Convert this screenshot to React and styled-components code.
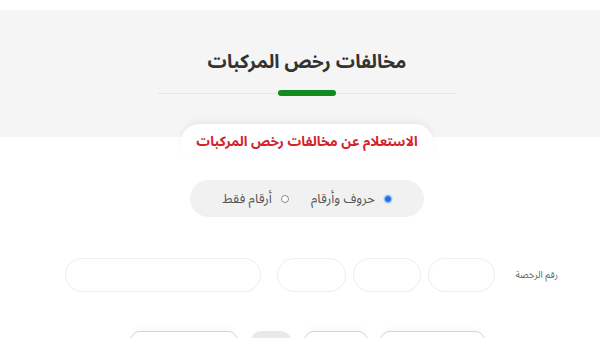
import * as React from "react";
import styled, { createGlobalStyle } from "styled-components";

const GlobalStyle = createGlobalStyle`
  html, body {
    margin: 0;
    padding: 0;
    background: #ffffff;
    overflow: hidden;
  }
  body {
    font-family: "Noto Sans Arabic", "DejaVu Sans", sans-serif;
    direction: rtl;
  }
`;

const Page = styled.main`
  padding-top: 10px;
  height: 328px;
  overflow: hidden;
`;

const HeaderBand = styled.header`
  background: #f5f5f5;
  height: 127px;
  padding-top: 39px;
  box-sizing: border-box;
  padding-left: 14px;
`;

const PageTitle = styled.h1`
  margin: 0;
  text-align: center;
  font-size: 19px;
  line-height: 26px;
  font-weight: 700;
  color: #333333;
`;

const Divider = styled.div`
  position: relative;
  width: 298px;
  height: 6px;
  margin: 15px auto 0;
  display: flex;
  align-items: center;
  justify-content: center;

  &::before {
    content: "";
    position: absolute;
    left: 0;
    right: 0;
    top: 3px;
    height: 1px;
    background: #e6e6e6;
  }
`;

const GreenBar = styled.span`
  position: relative;
  width: 58px;
  height: 6px;
  border-radius: 3px;
  background: #138a1f;
`;

const Content = styled.section`
  padding-left: 14px;
`;

const Tab = styled.div`
  width: 252px;
  height: 32px;
  margin: -13px auto 0;
  background: #ffffff;
  border-radius: 18px 18px 0 0;
  box-shadow: 0 -3px 6px rgba(0, 0, 0, 0.05);
  display: flex;
  align-items: center;
  justify-content: center;
  padding-top: 2px;
  box-sizing: border-box;
  color: #d3232c;
  font-size: 13.5px;
  font-weight: 700;
  white-space: nowrap;
`;

const RadioPill = styled.div`
  width: 234px;
  height: 37px;
  margin: 24px auto 0;
  border-radius: 19px;
  background: #f1f1f1;
  display: flex;
  align-items: center;
  justify-content: center;
  gap: 22px;
  box-sizing: border-box;
`;

const RadioOption = styled.label`
  display: flex;
  align-items: center;
  gap: 9px;
  font-size: 13px;
  color: #555555;
`;

const RadioDot = styled.span`
  width: 8px;
  height: 8px;
  border-radius: 50%;
  box-sizing: border-box;
  border: 1px solid ${(p) => (p.checked ? "#9cc3f5" : "#8a8a8a")};
  background: ${(p) => (p.checked ? "#1f6fe0" : "#ffffff")};
  box-shadow: ${(p) => (p.checked ? "0 0 0 1px #cfe0fa" : "none")};
`;

const FormRow = styled.div`
  width: 493px;
  margin: 41px 42px 0 0;
  display: flex;
  align-items: center;
  height: 34px;
`;

const FieldLabel = styled.span`
  flex: 0 0 63px;
  font-size: 9.5px;
  color: #666666;
  white-space: nowrap;
`;

const FieldGroup = styled.div`
  display: flex;
  gap: 7px;
`;

const Input = styled.div`
  width: ${(p) => p.w}px;
  height: 34px;
  border: 1px solid #eeeeee;
  border-radius: 17px;
  box-sizing: border-box;
  background: #ffffff;
`;

const WideInput = styled(Input)`
  margin-right: 16px;
`;

const ButtonRow = styled.div`
  display: flex;
  gap: 12px;
  margin: 39px 115px 0 0;
  width: 357px;
`;

const Button = styled.div`
  width: ${(p) => p.w}px;
  height: 30px;
  border: 1px solid #efc9c9;
  border-radius: 10px;
  box-sizing: border-box;
  background: #ffffff;
  box-shadow: 0 -5px 6px -4px rgba(215, 225, 230, 0.4);
`;

const GrayButton = styled.div`
  width: 42px;
  height: 30px;
  border-radius: 12px;
  background: #e9e9e9;
`;

export default function App() {
  return (
    <>
      <GlobalStyle />
      <Page>
        <HeaderBand>
          <PageTitle>مخالفات رخص المركبات</PageTitle>
          <Divider>
            <GreenBar />
          </Divider>
        </HeaderBand>
        <Content>
          <Tab>الاستعلام عن مخالفات رخص المركبات</Tab>
          <RadioPill>
            <RadioOption>
              <RadioDot checked />
              حروف وأرقام
            </RadioOption>
            <RadioOption>
              <RadioDot />
              أرقام فقط
            </RadioOption>
          </RadioPill>
        </Content>
        <FormRow>
          <FieldLabel>رقم الرخصة</FieldLabel>
          <FieldGroup>
            <Input w={67} />
            <Input w={68} />
            <Input w={69} />
          </FieldGroup>
          <WideInput w={197} />
        </FormRow>
        <ButtonRow>
          <Button w={105} />
          <Button w={64} />
          <GrayButton />
          <Button w={108} />
        </ButtonRow>
      </Page>
    </>
  );
}
